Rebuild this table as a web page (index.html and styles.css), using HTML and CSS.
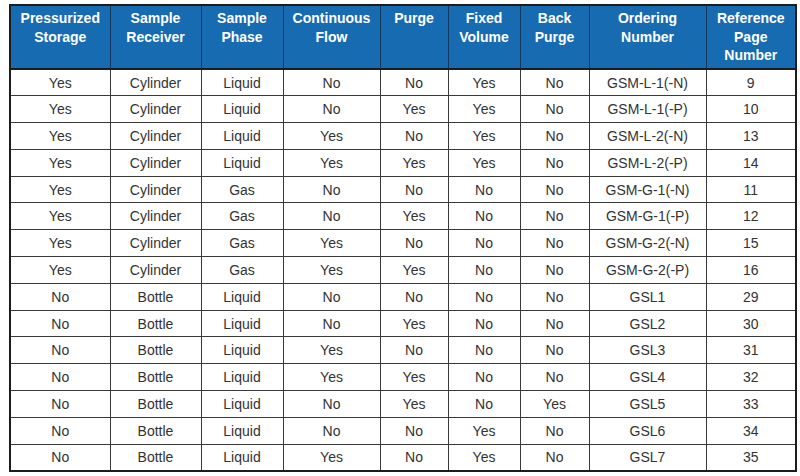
FILE: index.html
```html
<!DOCTYPE html>
<html>
<head>
<meta charset="utf-8">
<link rel="stylesheet" href="styles.css">
</head>
<body>
<table class="grid">
  <colgroup>
    <col class="c1"><col class="c2"><col class="c3"><col class="c4"><col class="c5"><col class="c6"><col class="c7"><col class="c8"><col class="c9">
  </colgroup>
  <thead>
    <tr>
      <th>Pressurized<br>Storage</th>
      <th>Sample<br>Receiver</th>
      <th>Sample<br>Phase</th>
      <th>Continuous<br>Flow</th>
      <th>Purge</th>
      <th>Fixed<br>Volume</th>
      <th>Back<br>Purge</th>
      <th>Ordering<br>Number</th>
      <th>Reference<br>Page<br>Number</th>
    </tr>
  </thead>
  <tbody>
    <tr><td>Yes</td><td>Cylinder</td><td>Liquid</td><td>No</td><td>No</td><td>Yes</td><td>No</td><td>GSM-L-1(-N)</td><td>9</td></tr>
    <tr><td>Yes</td><td>Cylinder</td><td>Liquid</td><td>No</td><td>Yes</td><td>Yes</td><td>No</td><td>GSM-L-1(-P)</td><td>10</td></tr>
    <tr><td>Yes</td><td>Cylinder</td><td>Liquid</td><td>Yes</td><td>No</td><td>Yes</td><td>No</td><td>GSM-L-2(-N)</td><td>13</td></tr>
    <tr><td>Yes</td><td>Cylinder</td><td>Liquid</td><td>Yes</td><td>Yes</td><td>Yes</td><td>No</td><td>GSM-L-2(-P)</td><td>14</td></tr>
    <tr><td>Yes</td><td>Cylinder</td><td>Gas</td><td>No</td><td>No</td><td>No</td><td>No</td><td>GSM-G-1(-N)</td><td>11</td></tr>
    <tr><td>Yes</td><td>Cylinder</td><td>Gas</td><td>No</td><td>Yes</td><td>No</td><td>No</td><td>GSM-G-1(-P)</td><td>12</td></tr>
    <tr><td>Yes</td><td>Cylinder</td><td>Gas</td><td>Yes</td><td>No</td><td>No</td><td>No</td><td>GSM-G-2(-N)</td><td>15</td></tr>
    <tr><td>Yes</td><td>Cylinder</td><td>Gas</td><td>Yes</td><td>Yes</td><td>No</td><td>No</td><td>GSM-G-2(-P)</td><td>16</td></tr>
    <tr><td>No</td><td>Bottle</td><td>Liquid</td><td>No</td><td>No</td><td>No</td><td>No</td><td>GSL1</td><td>29</td></tr>
    <tr><td>No</td><td>Bottle</td><td>Liquid</td><td>No</td><td>Yes</td><td>No</td><td>No</td><td>GSL2</td><td>30</td></tr>
    <tr><td>No</td><td>Bottle</td><td>Liquid</td><td>Yes</td><td>No</td><td>No</td><td>No</td><td>GSL3</td><td>31</td></tr>
    <tr><td>No</td><td>Bottle</td><td>Liquid</td><td>Yes</td><td>Yes</td><td>No</td><td>No</td><td>GSL4</td><td>32</td></tr>
    <tr><td>No</td><td>Bottle</td><td>Liquid</td><td>No</td><td>Yes</td><td>No</td><td>Yes</td><td>GSL5</td><td>33</td></tr>
    <tr><td>No</td><td>Bottle</td><td>Liquid</td><td>No</td><td>No</td><td>Yes</td><td>No</td><td>GSL6</td><td>34</td></tr>
    <tr><td>No</td><td>Bottle</td><td>Liquid</td><td>Yes</td><td>No</td><td>Yes</td><td>No</td><td>GSL7</td><td>35</td></tr>
  </tbody>
</table>
</body>
</html>
```
FILE: styles.css
```css
html, body {
  margin: 0;
  padding: 0;
  background: #ffffff;
}
body {
  padding: 4px 0 0 9px;
  font-family: "Liberation Sans", Arial, sans-serif;
}
.grid {
  border-collapse: collapse;
  table-layout: fixed;
  width: 786px;
  border: 2px solid #1c1c1c;
}
.c1 { width: 100px; }
.c2 { width: 91px; }
.c3 { width: 82px; }
.c4 { width: 97px; }
.c5 { width: 68px; }
.c6 { width: 72px; }
.c7 { width: 69px; }
.c8 { width: 117px; }
.c9 { width: 90px; }
.grid th {
  background: #176bb1;
  color: #ffffff;
  font-weight: bold;
  font-size: 14px;
  line-height: 18.5px;
  height: 64px;
  box-sizing: border-box;
  vertical-align: top;
  padding: 3px 2px 0;
  text-align: center;
  border: 1px solid #12385e;
  border-bottom: 2px solid #1c1c1c;
}
.grid td {
  font-size: 14px;
  color: #333333;
  text-align: center;
  vertical-align: middle;
  height: 26.8px;
  box-sizing: border-box;
  padding: 0 2px;
  border: 1px solid #3a3a3a;
}
```
